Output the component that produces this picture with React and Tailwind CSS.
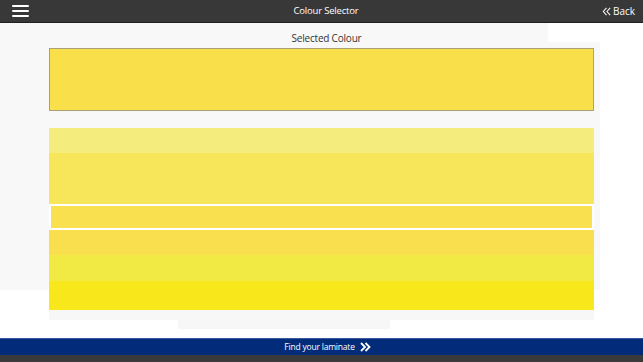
import React from 'react';

const stripes = [
  { h: 'h-[25px]', bg: 'bg-[#f4ec7c]' },
  { h: 'h-[51px]', bg: 'bg-[#f8e65a]' },
];
const stripesAfter = [
  { h: 'h-[25px]', bg: 'bg-[#f9de4e]' },
  { h: 'h-[26px]', bg: 'bg-[#f2ea44]' },
  { h: 'h-[29px]', bg: 'bg-[#f8e71a]' },
];

const App = () => {
  return (
    <div className="w-[643px] h-[362px] flex flex-col bg-white overflow-hidden" style={{ fontFamily: '"Open Sans", sans-serif' }}>
      <header className="h-[23px] shrink-0 bg-[#383838] border-b border-[#1f1f1f] flex items-center px-3 relative">
        <button className="flex flex-col gap-[3px] w-[17px]">
          <span className="h-[2px] bg-white rounded-sm" />
          <span className="h-[2px] bg-white rounded-sm" />
          <span className="h-[2px] bg-white rounded-sm" />
        </button>
        <h1 className="flex-1 text-center text-[9.5px] tracking-[-0.2px] text-white pl-[22px]">Colour Selector</h1>
        <button className="flex items-center gap-[1px] text-[10px] text-white mr-[-4px]">
          <svg width="11" height="11" viewBox="0 0 12 12" fill="none" stroke="white" strokeWidth="1.1">
            <path d="M6 2 L2.5 6 L6 10" />
            <path d="M10 2 L6.5 6 L10 10" />
          </svg>
          Back
        </button>
      </header>

      <main className="relative flex-1">
        <div className="absolute left-0 top-0 w-[600px] h-[267px] bg-[#f8f8f8]" />
        <div className="absolute left-[548px] top-0 w-[52px] h-[19px] bg-white" />
        <div className="relative flex flex-col ml-[49px] w-[545px]">
          <p className="text-center text-[10px] tracking-[-0.2px] text-[#333] pt-[8px] h-[25px] leading-[15px] pl-[10px]">Selected Colour</p>
          <div className="h-[63px] bg-[#f9e04b] border border-[#a8a27a]" />
          <div className="h-[17px]" />
          {stripes.map((s, i) => (
            <div key={i} className={`${s.h} ${s.bg}`} />
          ))}
          <div className="h-[26px] bg-white p-[2px]">
            <div className="h-full bg-[#f9e04e]" />
          </div>
          {stripesAfter.map((s, i) => (
            <div key={i} className={`${s.h} ${s.bg}`} />
          ))}
          <div className="h-[10px] bg-[#f7f7f7]" />
          <div className="h-[9px] ml-[129px] w-[212px] bg-[#f7f7f7]" />
        </div>
      </main>

      <footer className="shrink-0">
        <div className="h-[17px] bg-[#022b7a] border-t border-[#3a5aa0] flex items-center justify-center gap-[5px] text-white text-[8.5px] tracking-[-0.2px]">
          <span className="pl-[12px]">Find your laminate</span>
          <svg width="11" height="10" viewBox="0 0 11 10" fill="none" stroke="white" strokeWidth="1.8">
            <path d="M1 1 L5 5 L1 9" />
            <path d="M5.5 1 L9.5 5 L5.5 9" />
          </svg>
        </div>
        <div className="h-[7px] bg-[#3a3a3a]" />
      </footer>
    </div>
  );
};

export default App;
